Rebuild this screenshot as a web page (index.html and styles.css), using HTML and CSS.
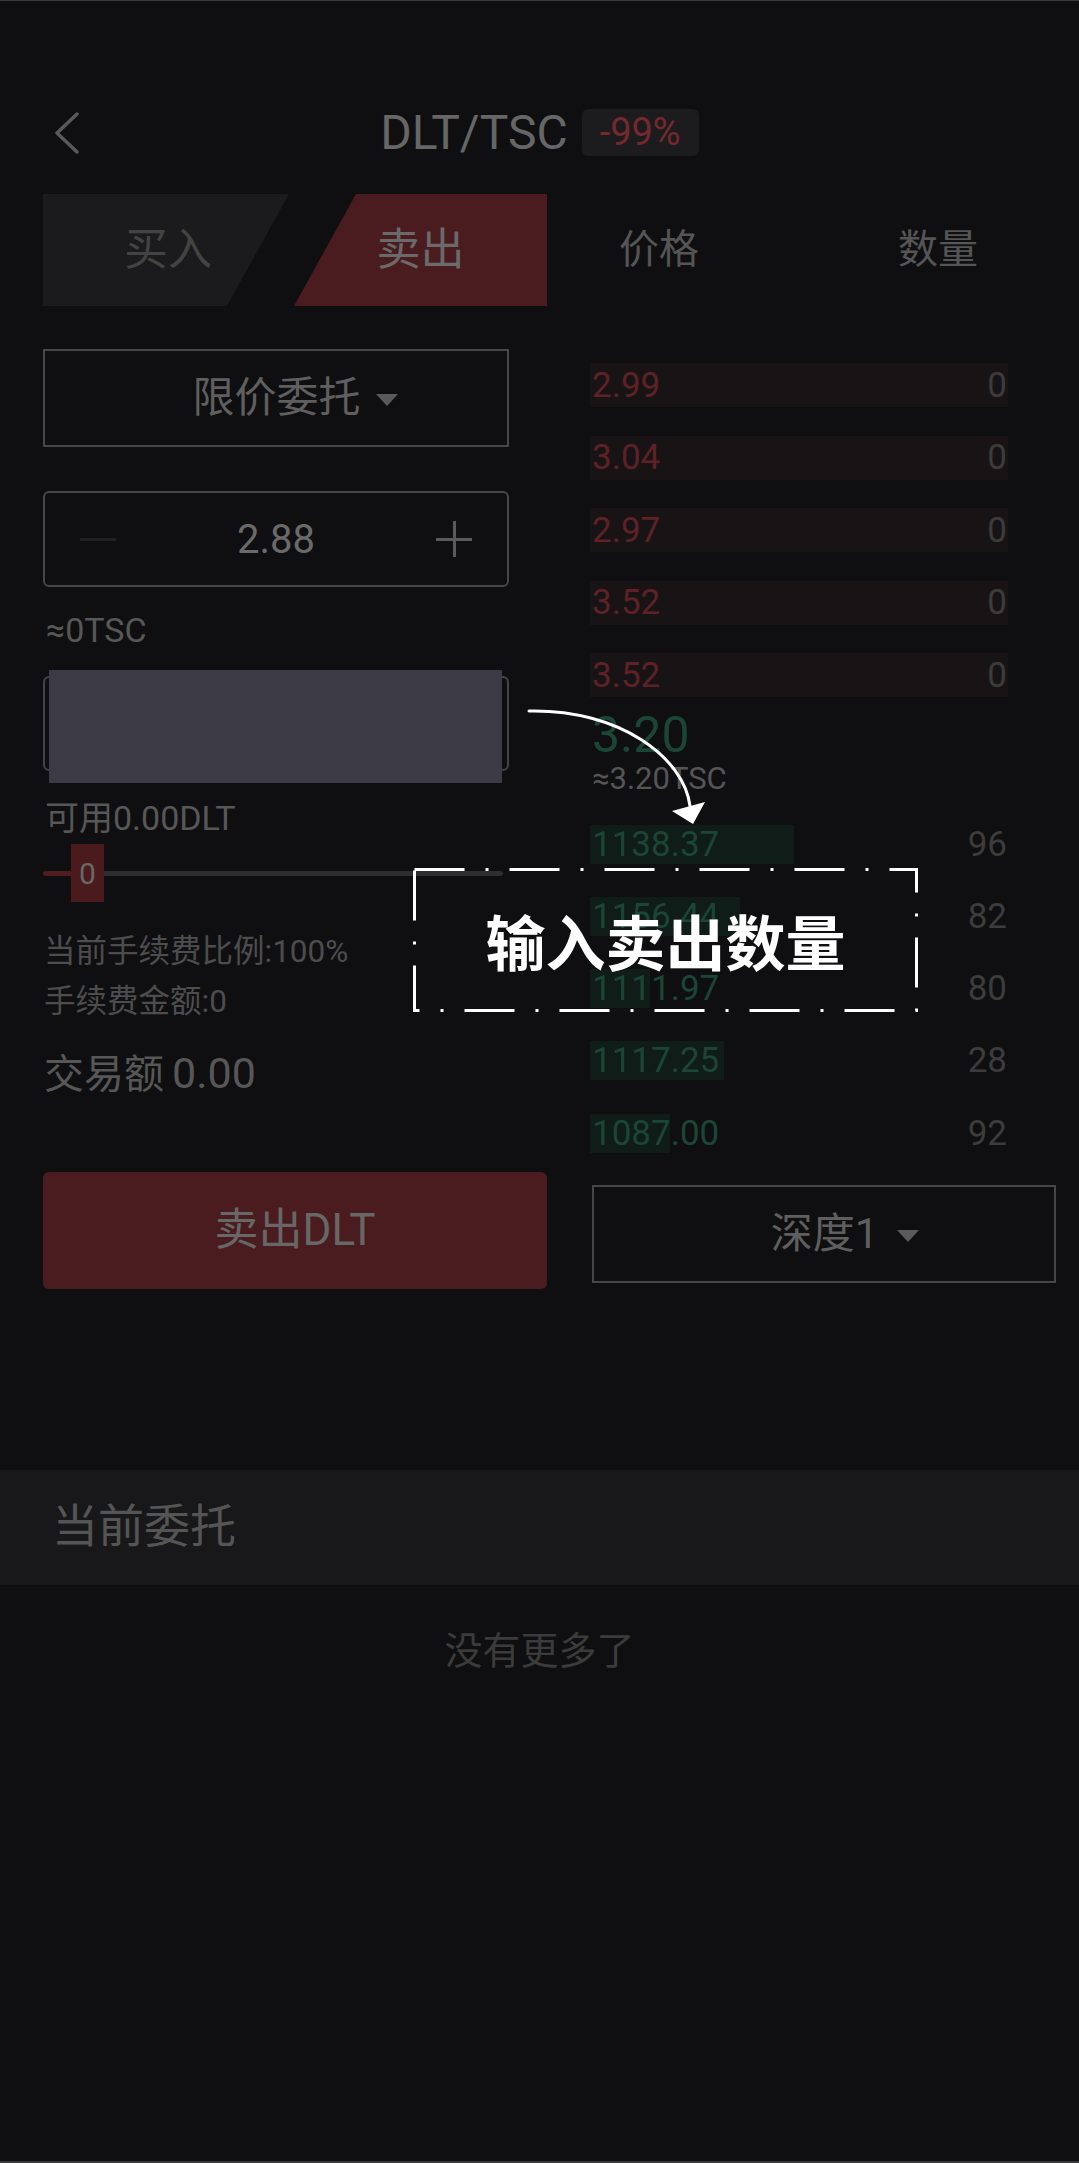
FILE: index.html
```html
<!DOCTYPE html>
<html lang="zh-CN">
<head>
<meta charset="utf-8">
<title>DLT/TSC</title>
<link rel="stylesheet" href="styles.css">
</head>
<body>
<div class="screen">
  <header class="nav">
    <div class="nav-left">
      <svg class="back" viewBox="0 0 26 42" width="26" height="42"><path d="M23 2 L3 21 L23 40" fill="none" stroke="#595959" stroke-width="3.5" stroke-linecap="round" stroke-linejoin="round"/></svg>
    </div>
    <div class="title-group">
      <span class="title">DLT/TSC</span>
      <span class="badge">-99%</span>
    </div>
    <div class="nav-right"></div>
  </header>

  <main class="trade">
    <section class="form-col">
      <div class="tabs">
        <div class="tab tab-buy">买入</div>
        <div class="tab tab-sell">卖出</div>
      </div>
      <div class="select-box"><span class="select-label">限价委托</span><span class="caret"></span></div>
      <div class="stepper"><span class="minus"></span><span class="stepper-value">2.88</span><span class="plus"></span></div>
      <div class="approx">≈0TSC</div>
      <div class="amount-box"><div class="spotlight"></div></div>
      <div class="avail">可用0.00DLT</div>
      <div class="slider">
        <span class="slider-fill"></span>
        <span class="slider-thumb">0</span>
        <span class="slider-track"></span>
      </div>
      <div class="fees">
        <div class="fee">当前手续费比例:100%</div>
        <div class="fee">手续费金额:0</div>
      </div>
      <div class="total">交易额<span class="total-num">0.00</span></div>
      <div class="sell-btn">卖出DLT</div>
    </section>

    <section class="book-col">
      <div class="book-head">
        <span class="head-price">价格</span>
        <span class="head-qty">数量</span>
      </div>
      <div class="asks">
        <div class="row ask"><span class="px">2.99</span><span class="qty">0</span></div>
        <div class="row ask"><span class="px">3.04</span><span class="qty">0</span></div>
        <div class="row ask"><span class="px">2.97</span><span class="qty">0</span></div>
        <div class="row ask"><span class="px">3.52</span><span class="qty">0</span></div>
        <div class="row ask"><span class="px">3.52</span><span class="qty">0</span></div>
      </div>
      <div class="last-price">3.20</div>
      <div class="last-approx">≈3.20TSC</div>
      <div class="bids">
        <div class="row bid" style="--w: 204px"><span class="px">1138.37</span><span class="qty">96</span></div>
        <div class="row bid" style="--w: 150px"><span class="px">1156.44</span><span class="qty">82</span></div>
        <div class="row bid" style="--w: 60px"><span class="px">1111.97</span><span class="qty">80</span></div>
        <div class="row bid" style="--w: 134px"><span class="px">1117.25</span><span class="qty">28</span></div>
        <div class="row bid" style="--w: 80px"><span class="px">1087.00</span><span class="qty">92</span></div>
      </div>
      <div class="depth-box"><span class="select-label">深度1</span><span class="caret caret-depth"></span></div>
    </section>
  </main>

  <section class="orders-head">当前委托</section>
  <div class="empty">没有更多了</div>

  <div class="callout">
    <svg class="callout-frame" width="505" height="144" viewBox="0 0 505 144"><rect x="1.5" y="1.5" width="502" height="141" fill="none" stroke="#ffffff" stroke-width="3" stroke-dasharray="50 21 3 21"/></svg>
    <span class="callout-text">输入卖出数量</span>
  </div>
  <svg class="arrow" width="200" height="130" viewBox="0 0 200 130">
    <path d="M9 11 C100 9 164 58 170 106" fill="none" stroke="#ffffff" stroke-width="3" stroke-linecap="round"/>
    <polygon points="152,111 185,102 173,124" fill="#ffffff"/>
  </svg>
</div>
</body>
</html>
```

FILE: styles.css
```css
* { box-sizing: border-box; }

html, body {
  margin: 0;
  padding: 0;
  background: #0f0f11;
}

body {
  font-family: Roboto, "Noto Sans CJK SC", sans-serif;
  color: #555555;
}

.screen {
  position: relative;
  width: 1079px;
  height: 2163px;
  overflow: hidden;
  background: #0f0f11;
  border-top: 1px solid #3a3a3c;
  border-bottom: 2px solid #3a3a3c;
}

/* ---------- nav ---------- */
.nav {
  margin-top: 108px;
  height: 47px;
  display: grid;
  grid-template-columns: 1fr auto 1fr;
  align-items: center;
}

.nav-left {
  padding-left: 54px;
  display: flex;
  align-items: center;
}

.back { display: block; }

.title-group {
  display: flex;
  align-items: center;
  gap: 14px;
}

.title {
  font-size: 48px;
  line-height: 47px;
  color: #666666;
}

.badge {
  height: 47px;
  line-height: 47px;
  padding: 0 18px;
  border-radius: 6px;
  background: #1c1b1d;
  color: #74292e;
  font-size: 38px;
}

/* ---------- trade area ---------- */
.trade {
  margin-top: 38px;
  padding-left: 43px;
  display: flex;
  gap: 43px;
  align-items: flex-start;
}

.form-col {
  width: 504px;
  display: flex;
  flex-direction: column;
}

.tabs {
  display: flex;
  height: 112px;
}

.tab {
  display: flex;
  align-items: center;
  justify-content: center;
  font-size: 44px;
  height: 112px;
  padding-bottom: 8px;
}

.tab-buy {
  width: 246px;
  background: #1b1b1d;
  color: #434343;
  clip-path: polygon(0 0, 100% 0, calc(100% - 62px) 100%, 0 100%);
  padding-left: 4px;
}

.tab-sell {
  width: 253px;
  margin-left: 5px;
  background: #4a1c1f;
  color: #6a6a6a;
  clip-path: polygon(62px 0, 100% 0, 100% 100%, 0 100%);
}

.select-box,
.depth-box {
  width: 466px;
  height: 98px;
  border: 2px solid #464646;
  display: flex;
  align-items: center;
  justify-content: center;
}

.select-box { margin-top: 43px; }

.select-label {
  font-size: 42px;
  color: #5f5f5f;
  line-height: 50px;
}

.caret {
  width: 0;
  height: 0;
  border-left: 11.5px solid transparent;
  border-right: 11.5px solid transparent;
  border-top: 12px solid #5a5a5a;
  margin-left: 15px;
  margin-right: -38px;
  margin-top: 4px;
}

.caret-depth {
  margin-left: 19px;
  margin-right: -42px;
}

.stepper {
  margin-top: 44px;
  width: 466px;
  height: 96px;
  border: 2px solid #464646;
  border-radius: 6px;
  display: flex;
  align-items: center;
  justify-content: space-between;
  padding: 0 35px;
}

.minus {
  width: 36px;
  height: 3px;
  background: #212123;
}

.stepper-value {
  font-size: 40px;
  color: #6a6a6a;
}

.plus {
  position: relative;
  width: 36px;
  height: 36px;
}

.plus::before,
.plus::after {
  content: "";
  position: absolute;
  background: #5a5a5a;
}

.plus::before {
  left: 0;
  top: 17px;
  width: 36px;
  height: 2.5px;
}

.plus::after {
  top: 0;
  left: 17px;
  width: 2.5px;
  height: 36px;
}

.approx {
  margin-top: 23px;
  font-size: 34px;
  line-height: 40px;
  padding-left: 3px;
  color: #575757;
}

.amount-box {
  position: relative;
  margin-top: 26px;
  width: 466px;
  height: 95px;
  border: 2px solid #444446;
  border-radius: 6px;
}

.spotlight {
  position: absolute;
  left: 4px;
  top: -8px;
  width: 453px;
  height: 113px;
  background: #3b3a45;
}

.avail {
  margin-top: 27px;
  font-size: 34px;
  line-height: 40px;
  padding-left: 2px;
  color: #575757;
}

.slider {
  margin-top: 6px;
  width: 460px;
  height: 58px;
  display: flex;
  align-items: center;
}

.slider-fill {
  width: 28px;
  height: 5px;
  background: #4f1c1f;
  border-radius: 3px 0 0 3px;
}

.slider-thumb {
  width: 33px;
  height: 58px;
  background: #4a1a1c;
  color: #686868;
  font-size: 30px;
  display: flex;
  align-items: center;
  justify-content: center;
}

.slider-track {
  flex: 1;
  height: 5px;
  background: #2e2e30;
  border-radius: 0 3px 3px 0;
}

.fees {
  margin-top: 25px;
}

.fee {
  font-size: 31.5px;
  line-height: 50px;
  color: #4d4d4d;
  padding-left: 1px;
}

.total {
  margin-top: 21px;
  font-size: 40px;
  line-height: 50px;
  color: #575757;
  padding-left: 1px;
  display: flex;
  align-items: baseline;
}

.total-num {
  font-size: 43px;
  margin-left: 8px;
}

.sell-btn {
  margin-top: 72px;
  width: 504px;
  height: 117px;
  border-radius: 6px;
  background: #4a1c1f;
  color: #676767;
  font-size: 44px;
  display: flex;
  align-items: center;
  justify-content: center;
  padding-bottom: 10px;
}

/* ---------- order book ---------- */
.book-col {
  width: 466px;
  display: flex;
  flex-direction: column;
}

.book-head {
  height: 112px;
  display: flex;
  align-items: center;
  font-size: 40px;
  color: #555555;
  padding-bottom: 8px;
}

.head-price {
  margin-left: 29px;
  width: 279px;
}

.asks,
.bids {
  display: flex;
  flex-direction: column;
}

.asks {
  margin-top: 57px;
  gap: 28.5px;
}

.bids {
  margin-top: 27px;
  gap: 28.25px;
}

.row {
  width: 418px;
  height: 44px;
  display: flex;
  align-items: center;
  justify-content: space-between;
  padding: 0 1px 0 2px;
  font-size: 35px;
}

.ask {
  background: #181416;
}

.ask .px { color: #5e2125; }

.qty { color: #3c3c3c; }

.bid {
  background: linear-gradient(#0f1c17, #0f1c17) no-repeat 0 center / var(--w) 39px;
}

.bid .px { color: #1b4536; }

.last-price {
  margin-top: 10px;
  font-size: 50px;
  line-height: 56px;
  color: #1b4636;
  padding-left: 2px;
}

.last-approx {
  font-size: 31px;
  line-height: 32px;
  color: #555555;
  padding-left: 2px;
}

.depth-box {
  margin-top: 30px;
  width: 464px;
  margin-left: 2px;
}

/* ---------- orders ---------- */
.orders-head {
  margin-top: 181px;
  height: 115px;
  background: #18181a;
  padding-left: 52px;
  padding-bottom: 12px;
  display: flex;
  align-items: center;
  font-size: 46px;
  color: #555555;
}

.empty {
  margin-top: 41px;
  text-align: center;
  font-size: 38px;
  line-height: 50px;
  color: #3b3b3b;
}

/* ---------- tutorial overlay ---------- */
.callout {
  position: absolute;
  left: 413px;
  top: 867px;
  width: 505px;
  height: 144px;
  display: flex;
  align-items: center;
  justify-content: center;
}

.callout-frame {
  position: absolute;
  left: 0;
  top: 0;
}

.callout-text {
  position: relative;
  font-family: "Noto Sans CJK SC", sans-serif;
  font-weight: 700;
  font-size: 60px;
  color: #ffffff;
  line-height: 70px;
}

.arrow {
  position: absolute;
  left: 520px;
  top: 699px;
}
```
